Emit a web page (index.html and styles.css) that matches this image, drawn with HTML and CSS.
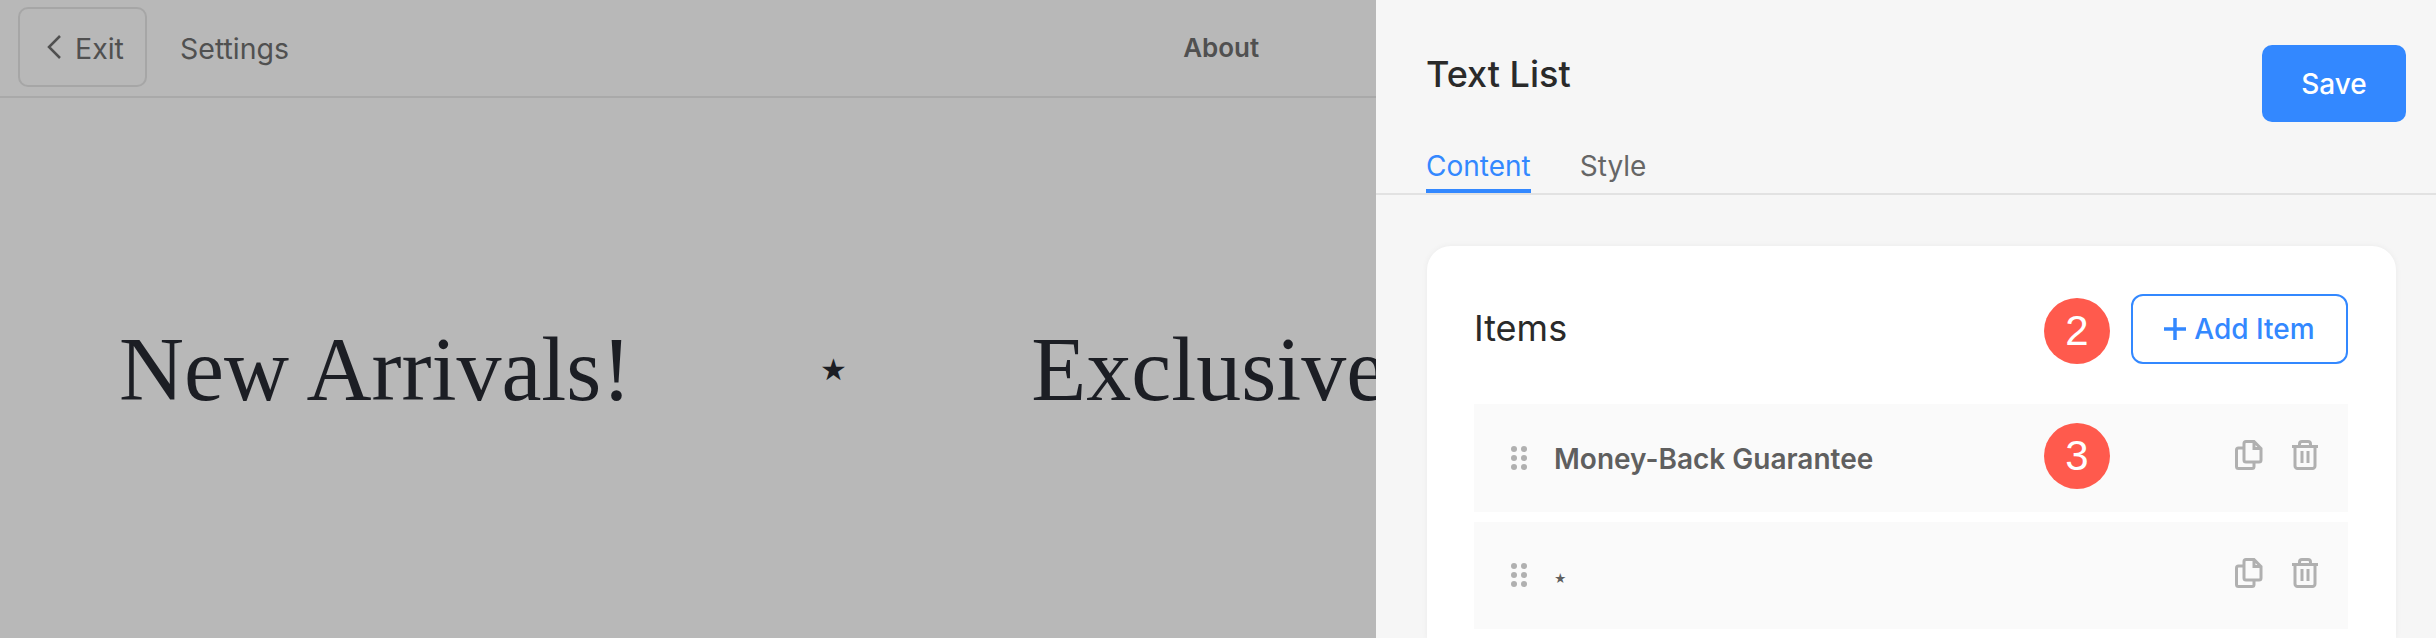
FILE: index.html
```html
<!DOCTYPE html>
<html lang="en">
<head>
<meta charset="utf-8">
<title>Text List</title>
<link rel="stylesheet" href="styles.css">
</head>
<body>
<div class="page">
  <main class="main">
    <header class="topbar">
      <button class="exit"><svg class="chev" viewBox="0 0 16 26"><path d="M14 2 3 13l11 11"/></svg><span>Exit</span></button>
      <span class="settings">Settings</span>
      <span class="about">About</span>
    </header>
    <div class="marquee">
      <span class="m-text">New Arrivals!</span>
      <span class="m-star">★</span>
      <span class="m-text">Exclusive</span>
    </div>
  </main>
  <aside class="panel">
    <div class="panel-head">
      <div class="panel-title">
        <h1>Text List</h1>
        <nav class="tabs"><span class="tab active">Content</span><span class="tab">Style</span></nav>
      </div>
      <button class="save">Save</button>
    </div>
    <section class="card">
      <div class="card-head">
        <h2>Items</h2>
        <button class="add"><svg class="plus" viewBox="0 0 22 22"><path d="M11 0v22M0 11h22"/></svg><span>Add Item</span></button>
        <span class="badge badge-2">2</span>
      </div>
      <div class="row">
        <svg class="grip" viewBox="0 0 16 24"><circle cx="3" cy="3" r="3"/><circle cx="13" cy="3" r="3"/><circle cx="3" cy="12" r="3"/><circle cx="13" cy="12" r="3"/><circle cx="3" cy="21" r="3"/><circle cx="13" cy="21" r="3"/></svg>
        <span class="row-label">Money-Back Guarantee</span>
        <svg class="ico" viewBox="0 0 28 30"><path d="M9 3.500a2 2 0 0 1 2-2h8l7 7V20a2 2 0 0 1-2 2H11a2 2 0 0 1-2-2zM19 2v6.500h6.500M9 8H3.500a2 2 0 0 0-2 2v16.500a2 2 0 0 0 2 2H17a2 2 0 0 0 2-2V22"/></svg>
        <svg class="ico trash" viewBox="0 0 26 30"><path d="M0 6.500h26M3 6.500V26a2.500 2.500 0 0 0 2.500 2.500h15A2.500 2.500 0 0 0 23 26V6.500M7.500 6.500V4a2.500 2.500 0 0 1 2.500-2.500h6A2.500 2.500 0 0 1 18.500 4v2.500M10 11v12M16 11v12"/></svg>
        <span class="badge badge-3">3</span>
      </div>
      <div class="row">
        <svg class="grip" viewBox="0 0 16 24"><circle cx="3" cy="3" r="3"/><circle cx="13" cy="3" r="3"/><circle cx="3" cy="12" r="3"/><circle cx="13" cy="12" r="3"/><circle cx="3" cy="21" r="3"/><circle cx="13" cy="21" r="3"/></svg>
        <span class="row-label star">★</span>
        <svg class="ico" viewBox="0 0 28 30"><path d="M9 3.500a2 2 0 0 1 2-2h8l7 7V20a2 2 0 0 1-2 2H11a2 2 0 0 1-2-2zM19 2v6.500h6.500M9 8H3.500a2 2 0 0 0-2 2v16.500a2 2 0 0 0 2 2H17a2 2 0 0 0 2-2V22"/></svg>
        <svg class="ico trash" viewBox="0 0 26 30"><path d="M0 6.500h26M3 6.500V26a2.500 2.500 0 0 0 2.500 2.500h15A2.500 2.500 0 0 0 23 26V6.500M7.500 6.500V4a2.500 2.500 0 0 1 2.500-2.500h6A2.500 2.500 0 0 1 18.500 4v2.500M10 11v12M16 11v12"/></svg>
      </div>
    </section>
  </aside>
</div>
</body>
</html>
```
FILE: styles.css
```css
* { box-sizing: border-box; }
html, body { margin: 0; height: 100%; overflow: hidden; }
body { font-family: Inter, "Liberation Sans", sans-serif; }
button { font-family: inherit; cursor: pointer; }
.page { display: flex; width: 2436px; height: 638px; overflow: hidden; }

.main { flex: 0 0 1376px; min-width: 0; background: #b8b8b8; overflow: hidden; }
.topbar {
  display: flex; align-items: center; height: 98px;
  padding: 0 0 2px 18px; border-bottom: 2px solid #a9a9a9;
  color: #505050;
}
.exit {
  display: flex; align-items: center; gap: 13px;
  width: 129px; height: 80px; padding: 0 0 0 26px;
  background: transparent; border: 2px solid #a6a6a6; border-radius: 10px;
  color: #505050; font-size: 28.500px;
}
.exit span { padding-top: 2px; }
.chev { width: 16px; height: 26px; fill: none; stroke: #505050; stroke-width: 2.500; }
.settings { margin-left: 33px; font-size: 28.500px; padding-top: 2px; }
.about { margin-left: 894px; font-size: 26px; font-weight: 600; padding-top: 1px; }

.marquee {
  display: flex; align-items: center; white-space: nowrap;
  height: 542px; padding: 0 0 0 119px;
  font-family: "Liberation Serif", serif; color: #1c1e24;
}
.m-text { font-size: 90px; flex: none; }
.m-star { flex: none; font-size: 30px; margin: 0 184px 0 189px; }

.panel { flex: 1; min-width: 0; background: #f6f6f6; display: flex; flex-direction: column; padding: 0 40px 0 50px; }
.panel-head { display: flex; justify-content: space-between; height: 195px; border-bottom: 2px solid #e2e2e2; margin: 0 -40px 0 -50px; padding: 0 30px 0 50px; }
.panel-title { display: flex; flex-direction: column; }
h1 { margin: 52px 0 0; font-size: 36px; font-weight: 500; line-height: 44px; color: #2a2a2a; }
.tabs { display: flex; gap: 49px; margin-top: 53px; }
.tab { font-size: 28px; line-height: 34px; height: 44px; color: #666; }
.tab.active { color: #3388ff; border-bottom: 4px solid #3388ff; }
.save {
  width: 144px; height: 77px; margin-top: 45px;
  background: #3388ff; color: #fff; border: 0; border-radius: 10px;
  font-size: 28px; font-weight: 500;
}

.card {
  margin-top: 51px; width: 969px; flex: 1; margin-left: 1px;
  background: #fff; border-radius: 24px 24px 0 0; padding: 48px 48px 0 47px;
  box-shadow: 0 0 6px rgba(0,0,0,.05);
}
.card-head { position: relative; display: flex; align-items: center; justify-content: space-between; height: 70px; margin-bottom: 40px; }
h2 { margin: -2px 0 0; font-size: 36px; font-weight: 400; color: #2a2a2a; }
.add {
  display: flex; align-items: center; justify-content: center; gap: 8px;
  width: 217px; height: 70px; padding: 0;
  background: #fff; color: #3388ff; border: 2px solid #3388ff; border-radius: 12px;
  font-size: 28px; font-weight: 500;
}
.plus { width: 22px; height: 22px; fill: none; stroke: #3388ff; stroke-width: 3.500; }

.row {
  position: relative; display: flex; align-items: center;
  height: 107.500px; margin-bottom: 10px; padding: 0 30px 0 37px;
  background: #fafafa;
}
.grip { width: 16px; height: 24px; fill: #b0b0b0; flex: none; }
.row-label { margin-left: 27px; flex: 1; font-size: 28px; font-weight: 600; color: #5f5f5f; padding-top: 2px; }
.row-label.star { font-size: 12px; font-weight: 400; padding-top: 6px; }
.ico { width: 28px; height: 30px; fill: none; stroke: #b0b0b0; stroke-width: 3; flex: none; margin-top: -5px; }
.ico.trash { width: 26px; margin-left: 29px; }

.badge {
  position: absolute; width: 66px; height: 66px; border-radius: 50%;
  background: #ff5a4d; color: #fff;
  display: flex; align-items: center; justify-content: center;
  font-family: "Liberation Sans", sans-serif; font-size: 42px;
}
.badge-2 { left: 570px; top: 4px; }
.badge-3 { left: 570px; top: 19px; }
```
